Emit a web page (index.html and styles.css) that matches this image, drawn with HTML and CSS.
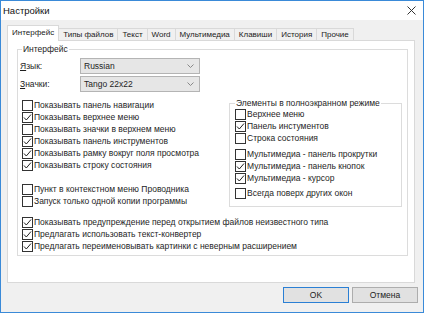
FILE: index.html
```html
<!DOCTYPE html>
<html lang="ru">
<head>
    <meta charset="UTF-8">
    <title>Настройки</title>
    <link rel="stylesheet" href="styles.css">
</head>
<body>
    <div class="window">
        <div class="titlebar">
            <span class="title">Настройки</span>
            <svg class="close" width="9" height="9" viewBox="0 0 9 9">
                <path d="M0.5 0.5 L8.5 8.5 M8.5 0.5 L0.5 8.5" stroke="#333" stroke-width="1" fill="none"/>
            </svg>
        </div>

        <div class="client">
            <div class="tabs">
                <div class="tab active">Интерфейс</div>
                <div class="tab">Типы файлов</div>
                <div class="tab">Текст</div>
                <div class="tab">Word</div>
                <div class="tab">Мультимедиа</div>
                <div class="tab">Клавиши</div>
                <div class="tab">История</div>
                <div class="tab">Прочие</div>
            </div>

            <div class="panel">
                <fieldset class="group main-group">
                    <legend>Интерфейс</legend>

                    <div class="field">
                        <label><u>Я</u>зык:</label>
                        <div class="select">
                            <span>Russian</span>
                            <svg width="7" height="4" viewBox="0 0 7 4"><path d="M0.5 0.5 L3.5 3.5 L6.5 0.5" stroke="#888" fill="none"/></svg>
                        </div>
                    </div>
                    <div class="field">
                        <label><u>З</u>начки:</label>
                        <div class="select">
                            <span>Tango 22x22</span>
                            <svg width="7" height="4" viewBox="0 0 7 4"><path d="M0.5 0.5 L3.5 3.5 L6.5 0.5" stroke="#888" fill="none"/></svg>
                        </div>
                    </div>

                    <div class="columns">
                        <div class="col-left">
                            <div class="list">
                                <div class="check"><span class="box"></span>Показывать панель навигации</div>
                                <div class="check on"><span class="box"></span>Показывать верхнее меню</div>
                                <div class="check"><span class="box"></span>Показывать значки в верхнем меню</div>
                                <div class="check on"><span class="box"></span>Показывать панель инструментов</div>
                                <div class="check on"><span class="box"></span>Показывать рамку вокруг поля просмотра</div>
                                <div class="check on"><span class="box"></span>Показывать строку состояния</div>
                            </div>
                            <div class="list list-gap">
                                <div class="check"><span class="box"></span>Пункт в контекстном меню Проводника</div>
                                <div class="check"><span class="box"></span>Запуск только одной копии программы</div>
                            </div>
                        </div>

                        <fieldset class="group sub-group">
                            <legend>Элементы в полноэкранном режиме</legend>
                            <div class="list">
                                <div class="check"><span class="box"></span>Верхнее меню</div>
                                <div class="check on"><span class="box"></span>Панель инстументов</div>
                                <div class="check"><span class="box"></span>Строка состояния</div>
                            </div>
                            <div class="list sub-gap">
                                <div class="check"><span class="box"></span>Мультимедиа - панель прокрутки</div>
                                <div class="check on"><span class="box"></span>Мультимедиа - панель кнопок</div>
                                <div class="check on"><span class="box"></span>Мультимедиа - курсор</div>
                            </div>
                            <div class="list sub-gap-small">
                                <div class="check"><span class="box"></span>Всегда поверх других окон</div>
                            </div>
                        </fieldset>
                    </div>

                    <div class="list bottom-list">
                        <div class="check on"><span class="box"></span>Показывать предупреждение перед открытием файлов неизвестного типа</div>
                        <div class="check on"><span class="box"></span>Предлагать использовать текст-конвертер</div>
                        <div class="check on"><span class="box"></span>Предлагать переименовывать картинки с неверным расширением</div>
                    </div>
                </fieldset>
            </div>

            <div class="buttons">
                <button class="btn default">OK</button>
                <button class="btn">Отмена</button>
            </div>
        </div>
    </div>
</body>
</html>
```

FILE: styles.css
```css
* { margin: 0; padding: 0; box-sizing: border-box; }
body {
    font-family: 'Liberation Sans', Arial, sans-serif;
    font-size: 8.5px;
    color: #1e1e1e;
    background: #fff;
}
.window {
    width: 424px;
    height: 313px;
    border: 1px solid #3a8ad8;
    background: #f0f0f0;
    display: flex;
    flex-direction: column;
}
.titlebar {
    height: 19px;
    flex: none;
    background: #fff;
    display: flex;
    align-items: center;
    justify-content: space-between;
    padding: 0 7px 0 2px;
}
.title {
    font-size: 9.5px;
    color: #111;
}
.client {
    flex: 1;
    display: flex;
    flex-direction: column;
    padding: 5px 5px 0 6px;
}

/* tabs */
.tabs {
    display: flex;
    align-items: flex-end;
    height: 15px;
    position: relative;
    z-index: 1;
    font-size: 8px;
}
.tab {
    height: 12px;
    line-height: 11px;
    padding: 0 4px;
    border: 1px solid #d9d9d9;
    border-bottom: none;
    border-left: none;
    background: #f0f0f0;
    color: #222;
}
.tab.active {
    height: 16px;
    line-height: 14px;
    margin-bottom: -1px;
    border-left: 1px solid #d9d9d9;
    background: #fff;
}

/* panel */
.panel {
    height: 243px;
    flex: none;
    margin-right: 3px;
    background: #fff;
    border: 1px solid #d9d9d9;
    padding: 3px 6px 0 9px;
}
.group {
    border: 1px solid #dcdcdc;
    min-width: 0;
}
.group legend {
    line-height: 10px;
    height: 10px;
    padding: 0 1px;
    margin-left: 2px;
}
.main-group {
    padding: 4px 0 3px 2px;
}
.field {
    display: flex;
    align-items: center;
    height: 16px;
    margin-bottom: 2px;
}
.field label {
    width: 60px;
}
.select {
    width: 120px;
    height: 16px;
    display: flex;
    align-items: center;
    justify-content: space-between;
    padding: 0 5px 0 3px;
    background: #e6e6e6;
    border: 1px solid #b4b4b4;
}

.columns {
    display: grid;
    grid-template-columns: 1fr 173px;
    margin-top: 7px;
    margin-right: 5px;
}
.list {
    padding-left: 2px;
}
.list-gap { margin-top: 12px; }
.check {
    display: flex;
    align-items: center;
    gap: 1px;
    height: 12px;
    white-space: nowrap;
}
.box {
    width: 11px;
    height: 11px;
    flex: none;
    border: 1px solid #333;
    background: #fff;
}
.check.on .box {
    background: #fff url("data:image/svg+xml;utf8,<svg xmlns='http://www.w3.org/2000/svg' width='9' height='9' viewBox='0 0 9 9'><path d='M1 4.5 L3.3 7 L8 1.5' stroke='%23222' stroke-width='1' fill='none'/></svg>") center / 9px 9px no-repeat;
}

.sub-group {
    margin-top: -1px;
    padding: 0 0 0 4px;
}
.sub-group legend { margin-left: 1px; }
.sub-group .list { padding-left: 1px; }
.sub-gap { margin-top: 4px; }
.sub-gap-small { margin-top: 3px; }

.bottom-list { margin-top: 9px; }

/* buttons */
.buttons {
    display: flex;
    justify-content: flex-end;
    gap: 3px;
    margin-top: 4px;
}
.btn {
    width: 66px;
    height: 16px;
    font-family: inherit;
    font-size: 8.5px;
    color: #222;
    background: #e1e1e1;
    border: 1px solid #adadad;
}
.btn.default {
    border-color: #2a7fd4;
}
```
